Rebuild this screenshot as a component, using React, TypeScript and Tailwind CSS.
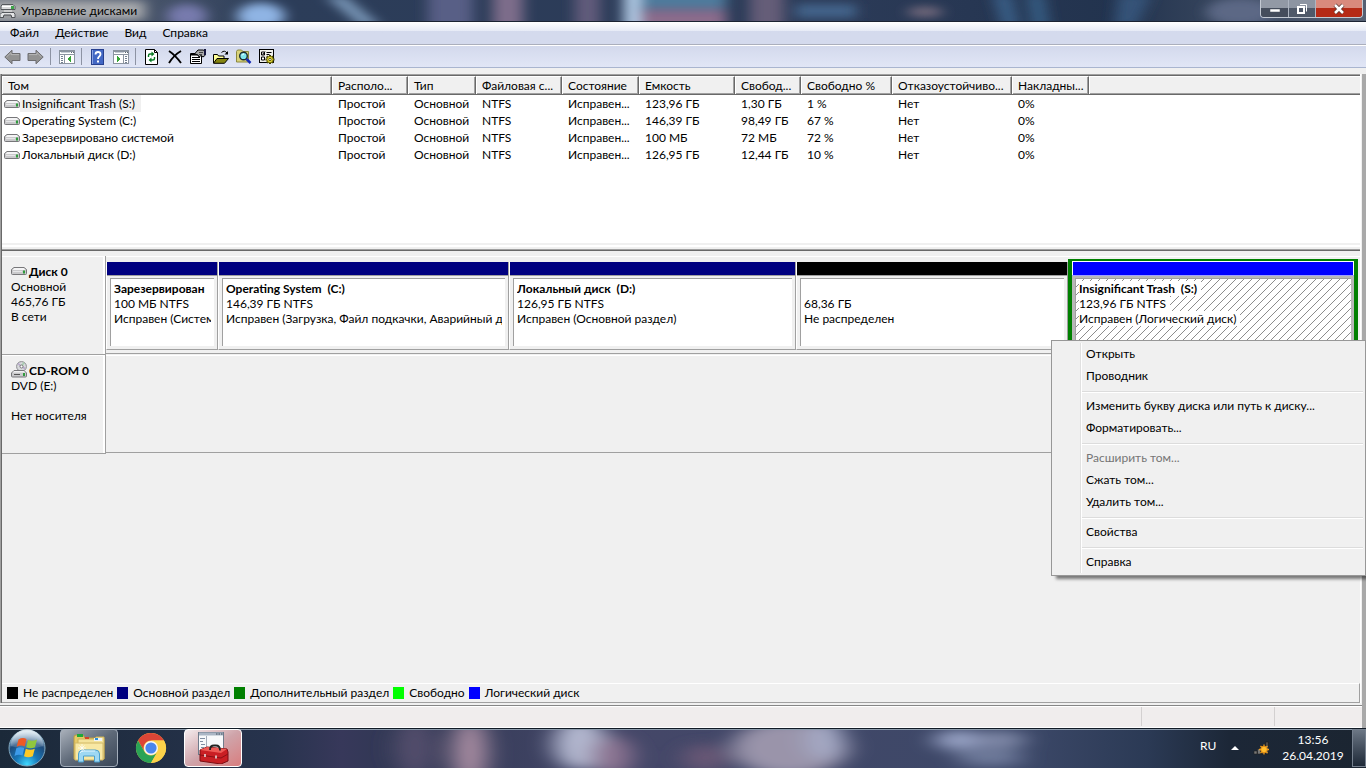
import React from "react";
import clsx from "clsx";

const menus = ["Файл", "Действие", "Вид", "Справка"];

const columns = [
  { title: "Том", width: "w-[330px]" },
  { title: "Располо...", width: "w-[76px]" },
  { title: "Тип", width: "w-[68px]" },
  { title: "Файловая с...", width: "w-[86px]" },
  { title: "Состояние", width: "w-[77px]" },
  { title: "Емкость", width: "w-[96px]" },
  { title: "Свобод...", width: "w-[66px]" },
  { title: "Свободно %", width: "w-[91px]" },
  { title: "Отказоустойчиво...", width: "w-[120px]" },
  { title: "Накладны...", width: "w-[77px]" },
];

const volumes = [
  ["Insignificant Trash (S:)", "Простой", "Основной", "NTFS", "Исправен...", "123,96 ГБ", "1,30 ГБ", "1 %", "Нет", "0%"],
  ["Operating System (C:)", "Простой", "Основной", "NTFS", "Исправен...", "146,39 ГБ", "98,49 ГБ", "67 %", "Нет", "0%"],
  ["Зарезервировано системой", "Простой", "Основной", "NTFS", "Исправен...", "100 МБ", "72 МБ", "72 %", "Нет", "0%"],
  ["Локальный диск (D:)", "Простой", "Основной", "NTFS", "Исправен...", "126,95 ГБ", "12,44 ГБ", "10 %", "Нет", "0%"],
];

const partitions = [
  { name: "Зарезервирован", size: "100 МБ NTFS", status: "Исправен (Систем", bar: "bg-[#000080]", grow: "grow-[110]" },
  { name: "Operating System  (C:)", size: "146,39 ГБ NTFS", status: "Исправен (Загрузка, Файл подкачки, Аварийный д", bar: "bg-[#000080]", grow: "grow-[289]" },
  { name: "Локальный диск  (D:)", size: "126,95 ГБ NTFS", status: "Исправен (Основной раздел)", bar: "bg-[#000080]", grow: "grow-[285]" },
  { name: "", size: "68,36 ГБ", status: "Не распределен", bar: "bg-black", grow: "grow-[270]" },
];

const legend = [
  { label: "Не распределен", color: "bg-black" },
  { label: "Основной раздел", color: "bg-[#000080]" },
  { label: "Дополнительный раздел", color: "bg-[#008000]" },
  { label: "Свободно", color: "bg-[#00ff00]" },
  { label: "Логический диск", color: "bg-[#0000ff]" },
];

const contextGroups = [
  ["Открыть", "Проводник"],
  ["Изменить букву диска или путь к диску...", "Форматировать..."],
  ["Расширить том...", "Сжать том...", "Удалить том..."],
  ["Свойства"],
  ["Справка"],
];

const DriveIcon = () => (
  <svg width="16" height="16" viewBox="0 0 16 16" className="shrink-0">
    <path d="M3 4.500h10l2.500 2v4q0 1-1 1h-13q-1 0-1-1v-4z" fill="#c9c9cb" stroke="#77777a" />
    <path d="M3.300 5h9.400l1.800 2H1.500z" fill="#f4f4f5" />
    <path d="M2 8.500h9" stroke="#e6e6e8" />
    <rect x="12" y="7.500" width="2" height="3" fill="#2f9a3c" />
  </svg>
);

const CdIcon = () => (
  <svg width="16" height="17" viewBox="0 0 16 17" className="shrink-0">
    <circle cx="10.500" cy="5.500" r="4.900" fill="#d8dadd" stroke="#8c8c90" />
    <path d="M10.500 5.500L7 2.500M10.500 5.500l3.500 2" stroke="#b7a6cc" strokeWidth="1.500" />
    <path d="M10.500 5.500L13 1.500" stroke="#a7cfae" strokeWidth="1.500" />
    <circle cx="10.500" cy="5.500" r="1.500" fill="#fff" stroke="#777" />
    <path d="M3 9.500h10l2.500 2.500v3q0 1-1 1h-13q-1 0-1-1v-3z" fill="#c9c9cb" stroke="#77777a" />
    <path d="M3.300 10h9.400l1.600 1.500H1.700z" fill="#f1f1f2" />
    <path d="M3 13.500h6" stroke="#555" />
    <rect x="12" y="12" width="2" height="3" fill="#2f9a3c" />
  </svg>
);

const AppIcon = () => (
  <svg width="16" height="16" viewBox="0 0 16 16" className="shrink-0">
    <path d="M2 1.500h11l2 2v3H1v-3z" fill="#d9dadb" stroke="#55585c" />
    <path d="M2 3.500h10" stroke="#fff" />
    <rect x="11" y="3" width="3" height="3" fill="#3da549" />
    <path d="M2 9.500h12l1 2v3H0v-3z" fill="#e3e4e5" stroke="#55585c" />
    <path d="M3 15l1-3h7l1 3" fill="#9a9c9f" stroke="#4a4d50" />
    <path d="M4 8h8" stroke="#e9e9e9" />
  </svg>
);

const ArrowIcon = ({ flip }: { flip?: boolean }) => (
  <svg width="17" height="16" viewBox="0 0 17 16" className={clsx(flip && "-scale-x-100")}>
    <path d="M.8 8L8 1.200v3.300h8v7H8v3.300z" fill="#929292" stroke="#6d6d70" strokeLinejoin="round" />
    <path d="M2.500 8L7 3.600v2h8" fill="none" stroke="#b5b5b5" />
  </svg>
);

const PaneIcon = ({ flip }: { flip?: boolean }) => (
  <svg width="16" height="14" viewBox="0 0 16 14" shapeRendering="crispEdges">
    <rect x=".5" y=".5" width="15" height="13" fill="#fff" stroke="#8b94a0" />
    <path d="M1 1.500h14M1 4.500h14" stroke="#8b94a0" />
    <path d="M2 2.500h9" stroke="#c8ced6" />
    <path d="M12 2.500h1M14 2.500h1" stroke="#5c6670" />
    {flip ? (
      <>
        <path d="M10.500 5v9" stroke="#8b94a0" />
        <path d="M12 6.500h2M12 8.500h2M12 10.500h2M12 12.500h2" stroke="#748091" />
        <path d="M4 6l4 3-4 3z" fill="#35a535" />
      </>
    ) : (
      <>
        <path d="M5.500 5v9" stroke="#8b94a0" />
        <path d="M2 6.500h2M2 8.500h2M2 10.500h2M2 12.500h2" stroke="#748091" />
        <path d="M12 6L8 9l4 3z" fill="#35a535" />
      </>
    )}
  </svg>
);

const HelpIcon = () => (
  <svg width="13" height="16" viewBox="0 0 13 16">
    <rect x=".5" y=".5" width="12" height="15" fill="#4267c4" stroke="#27408f" />
    <path d="M1.500 1v14" stroke="#89a3e2" />
    <path d="M4.500 5.500q0-2.500 2.500-2.500t2.500 2.200q0 1.300-1.300 2.200T7 10" fill="none" stroke="#fff" strokeWidth="1.800" />
    <rect x="6" y="11.500" width="2" height="2" fill="#fff" />
  </svg>
);

const RefreshIcon = () => (
  <svg width="13" height="16" viewBox="0 0 13 16">
    <path d="M.5.5h9l3 3v12H.5z" fill="#fff" stroke="#000" />
    <path d="M9.500.5v3h3" fill="none" stroke="#000" />
    <path d="M3.500 8V6.500q0-1.500 1.500-1.500h2M9.500 8v1.500q0 1.500-1.500 1.500H6" fill="none" stroke="#087a24" strokeWidth="1.400" />
    <path d="M6.500 2.500L9.500 5l-3 2.500zM6.500 8.500v5L3.500 11z" fill="#087a24" />
  </svg>
);

const DeleteIcon = () => (
  <svg width="14" height="14" viewBox="0 0 14 14">
    <path d="M1 1q6 4 12 12" fill="none" stroke="#000" strokeWidth="1.900" />
    <path d="M13 1Q6 5 1 13" fill="none" stroke="#000" strokeWidth="1.900" />
  </svg>
);

const PropertiesIcon = () => (
  <svg width="16" height="15" viewBox="0 0 16 15">
    <path d="M.5 4.500h11v10H.5z" fill="#fff" stroke="#000" />
    <path d="M1 5.500h10" stroke="#000" strokeWidth="2" />
    <path d="M2 8.500h8M2 10.500h8M2 12.500h8" stroke="#000" />
    <path d="M4.500 5l3.500-4h5l2.500 1v4l-2.500 2-2-1.500-2 1.500-1-2z" fill="#a9a9a9" stroke="#000" />
    <path d="M9 3.500h4M9 5.500h3" stroke="#444" />
    <rect x="14" y="0" width="2" height="6" fill="#15153c" />
  </svg>
);

const OpenIcon = () => (
  <svg width="16" height="14" viewBox="0 0 16 14">
    <path d="M.5 13V4.500h4l1 1.500H11v3" fill="#ffff9a" stroke="#000" />
    <path d="M.5 13.300L4 8.500h11.500L11.500 13.300z" fill="#858510" stroke="#000" />
    <path d="M8.500 2.500q3-2.800 5.500.500" fill="none" stroke="#000" />
    <path d="M15 1v3.500h-3.500z" fill="#000" />
  </svg>
);

const FindIcon = () => (
  <svg width="16" height="15" viewBox="0 0 16 15">
    <path d="M.5 13V2.500l1-1.500h4l1.500 1.500h5.500V13z" fill="#d9d37b" stroke="#8b883f" />
    <circle cx="7.500" cy="7" r="3.800" fill="#7fe6ee" stroke="#1b2b34" strokeWidth="1.400" />
    <path d="M6 6.500q.5-1.500 2-1.500" fill="none" stroke="#fff" />
    <path d="M10.500 10l4 4" stroke="#1428b4" strokeWidth="2.500" />
  </svg>
);

const SettingsIcon = () => (
  <svg width="16" height="16" viewBox="0 0 16 16">
    <rect x=".5" y=".5" width="14" height="13" fill="#f1f1ec" stroke="#000" />
    <path d="M2.500 3h3v3h-3zM2.500 8h3v3h-3z" fill="#fff" stroke="#000" />
    <path d="M3 4.500l1 1 2-3M7.500 3.500h5M7.500 5.500h3M7.500 8.500h2" fill="none" stroke="#000" />
    <path d="M11 6v9M6.500 10.500h9M7.800 7.300l6.400 6.400M14.200 7.300l-6.400 6.400" stroke="#3b3a00" strokeWidth="2" />
    <circle cx="11" cy="10.500" r="3.200" fill="#e6dd37" stroke="#77700c" />
    <circle cx="11" cy="10.500" r="1.200" fill="#fff" stroke="#55500a" />
  </svg>
);

const ToolButton = ({ label, children }: { label: string; children: React.ReactNode }) => (
  <button aria-label={label} className="flex h-5 w-[23px] items-center justify-center">
    {children}
  </button>
);

const Separator = () => <span className="mr-1 ml-[3px] h-[17px] w-px bg-[#8d93a3]" />;

// Blurred wallpaper that shows through the glass of the window frame
const TitleGlass = () => (
  <svg className="absolute inset-0 h-full w-full" viewBox="0 0 1366 21" preserveAspectRatio="none">
    <defs>
      <filter id="titleBlur" x="-20%" y="-100%" width="140%" height="300%">
        <feGaussianBlur stdDeviation="7 4" />
      </filter>
      <linearGradient id="titleBase">
        <stop offset="0" stopColor="#6d7480" />
        <stop offset=".1" stopColor="#4a566b" />
        <stop offset=".2" stopColor="#2c3d59" />
        <stop offset=".6" stopColor="#2c3b58" />
        <stop offset=".82" stopColor="#22334e" />
        <stop offset="1" stopColor="#556073" />
      </linearGradient>
    </defs>
    <rect width="1366" height="21" fill="url(#titleBase)" />
    <g filter="url(#titleBlur)">
      <rect x="-10" y="1" width="155" height="19" fill="#b9b8b8" opacity=".85" />
      <ellipse cx="187" cy="16" rx="20" ry="12" fill="#777aad" />
      <ellipse cx="261" cy="16" rx="24" ry="13" fill="#8fb4e4" />
      <path d="M325-4l36 30h20L345-4z" fill="#7997b8" />
      <rect x="428" y="-10" width="45" height="42" fill="#595f86" />
      <rect x="493" y="-10" width="30" height="42" fill="#7e6d8b" />
      <rect x="575" y="-10" width="25" height="42" fill="#625b7b" />
      <rect x="624" y="-10" width="16" height="42" fill="#b4cde8" />
      <rect x="640" y="-10" width="86" height="19" fill="#507b9d" />
      <rect x="640" y="10" width="86" height="20" fill="#8b6c8c" />
      <rect x="750" y="-10" width="34" height="42" fill="#655d78" />
      <rect x="796" y="4" width="60" height="14" fill="#42648a" />
      <ellipse cx="925" cy="12" rx="18" ry="5" fill="#776c7e" />
      <path d="M992-6h20l8 34h-18z" fill="#385c83" />
      <path d="M1026-6h18l6 34h-18z" fill="#355a80" />
      <path d="M1118-6h34l-16 34h-22z" fill="#355278" />
      <ellipse cx="1240" cy="12" rx="34" ry="14" fill="#5b6885" />
    </g>
  </svg>
);

const TaskbarGlass = () => (
  <svg className="absolute inset-0 h-full w-full" viewBox="0 0 1366 40" preserveAspectRatio="none">
    <defs>
      <filter id="taskBlur" x="-20%" y="-50%" width="140%" height="200%">
        <feGaussianBlur stdDeviation="12 6" />
      </filter>
      <linearGradient id="taskBase">
        <stop offset="0" stopColor="#1b2939" />
        <stop offset=".2" stopColor="#27334d" />
        <stop offset=".25" stopColor="#37385a" />
        <stop offset=".29" stopColor="#303854" />
        <stop offset=".45" stopColor="#454768" />
        <stop offset=".75" stopColor="#3c4868" />
        <stop offset=".84" stopColor="#2b3a55" />
        <stop offset=".9" stopColor="#1c2737" />
        <stop offset="1" stopColor="#1b2531" />
      </linearGradient>
    </defs>
    <rect width="1366" height="40" fill="url(#taskBase)" />
    <g filter="url(#taskBlur)">
      <ellipse cx="415" cy="20" rx="20" ry="30" fill="#524d6c" />
      <ellipse cx="470" cy="24" rx="17" ry="34" fill="#a98da2" />
      <ellipse cx="580" cy="16" rx="26" ry="26" fill="#b2b7cf" />
      <ellipse cx="612" cy="28" rx="20" ry="20" fill="#8b7391" />
      <ellipse cx="705" cy="30" rx="22" ry="14" fill="#675775" />
      <ellipse cx="790" cy="20" rx="58" ry="28" fill="#9a94aa" />
      <ellipse cx="825" cy="12" rx="18" ry="20" fill="#a4a9c4" />
      <ellipse cx="960" cy="12" rx="26" ry="10" fill="#97a2c4" />
      <ellipse cx="1000" cy="12" rx="26" ry="9" fill="#8089a8" />
      <ellipse cx="990" cy="30" rx="34" ry="8" fill="#707c9c" />
    </g>
    <path d="M0 .5h1366" stroke="#111b26" />
    <path d="M0 1.500h1366" stroke="#8d9cac" />
  </svg>
);

const StartOrb = () => (
  <svg width="38" height="38" viewBox="0 0 38 38">
    <defs>
      <radialGradient id="orb" cx=".5" cy=".95" r=".9">
        <stop offset="0" stopColor="#3fd9ff" />
        <stop offset=".35" stopColor="#1777b8" />
        <stop offset=".7" stopColor="#1f4c7c" />
        <stop offset="1" stopColor="#9fc0d8" />
      </radialGradient>
      <linearGradient id="orbShine" x2="0" y2="1">
        <stop offset="0" stopColor="#fff" stopOpacity=".75" />
        <stop offset="1" stopColor="#fff" stopOpacity=".1" />
      </linearGradient>
    </defs>
    <circle cx="19" cy="19" r="18" fill="url(#orb)" stroke="#7fa6bd" />
    <path d="M2.500 17a16.500 16.500 0 0 1 33 0q-16 5-33 0z" fill="url(#orbShine)" />
    <path d="M10.500 10.500q4-2.500 8-.5l-1.800 7.500q-4-2-8 .3z" fill="#ee5a24" />
    <path d="M20 10.800q4 2 9-.3l-2 7.700q-4.500 2-8.800 0z" fill="#8fc73e" />
    <path d="M8.300 19.300q4-2.200 8-.2l-1.800 7.500q-4-2-8 .4z" fill="#3d9be9" />
    <path d="M17.800 19.700q4.500 2 9 0l-2 7.600q-4.700 2-8.800 0z" fill="#fbc926" />
  </svg>
);

const ExplorerIcon = () => (
  <svg width="34" height="32" viewBox="0 0 34 32">
    <path d="M2 5q0-2 2-2h7l2 3h18q1 0 1 1v20H2z" fill="#e6c968" stroke="#b99b43" />
    <rect x="5" y="2" width="6" height="3" fill="#1fa83a" />
    <path d="M6 7h16l2-2h8v22H6z" fill="#f4e39b" stroke="#cbb058" />
    <rect x="13" y="5" width="4" height="2" fill="#d54227" />
    <rect x="22" y="6" width="8" height="3" fill="#eef4fa" />
    <rect x="23" y="6" width="3" height="2" fill="#2d8fd5" />
    <path d="M3 11h28v17H3z" fill="#f8e8a4" stroke="#d2b866" />
    <path d="M6.500 30v-8q0-4 4-4h13q4 0 4 4v8h-5v-6h-11v6z" fill="#9ed8f3" stroke="#4b9fcb" />
    <path d="M8 21q1-2 3-2h12" fill="none" stroke="#e3f6ff" />
    <path d="M10 12v8M6 16h8M7.500 13.500l5 5M12.500 13.500l-5 5" stroke="#fff" strokeWidth=".7" />
  </svg>
);

const ChromeIcon = () => (
  <svg width="32" height="32" viewBox="0 0 32 32">
    <circle cx="16" cy="16" r="15" fill="#fcd24a" />
    <path d="M3 8.500A15 15 0 0 1 29 8.500H16a7.500 7.500 0 0 0-6.500 11.200z" fill="#dc4536" />
    <path d="M3 8.500l6.500 11.200A7.500 7.500 0 0 0 22.500 19.700L16 31A15 15 0 0 1 3 8.500z" fill="#2aa356" />
    <path d="M29 8.500H16v.2a7.500 7.500 0 0 1 6.500 11L16 31A15 15 0 0 0 29 8.500z" fill="#fcd24a" />
    <circle cx="16" cy="16" r="7" fill="#f6f6f6" />
    <circle cx="16" cy="16" r="5.600" fill="#4a86ee" />
  </svg>
);

const ToolboxIcon = () => (
  <svg width="32" height="32" viewBox="0 0 32 32">
    <rect x="1.500" y=".5" width="25" height="22" fill="#f7f9fb" stroke="#6f7b8b" />
    <path d="M2 2h24" stroke="#aab6c5" strokeWidth="3" />
    <path d="M19 2h1.500M21.500 2H23M24 2h1.500" stroke="#3f4a5a" />
    <path d="M9.500 4v18" stroke="#a3adba" />
    <path d="M3 6.500h5M3 9.500h3M4 12.500h4M4 15.500h3M3 18.500h5" stroke="#7f8ea2" />
    <path d="M3 18l7-3 20 2 1 3v9l-7 3-21-3z" fill="#c91f24" stroke="#7c0c12" />
    <path d="M3 18l7-3 20 2-6 4z" fill="#ee5a56" />
    <path d="M13 18q0-4.500 4-4.500h2q4 0 4 5" fill="none" stroke="#222" strokeWidth="1.800" />
    <path d="M3 23l21 3 7-4" fill="none" stroke="#8a1015" />
    <path d="M8 22v3M19 23.500v3" stroke="#e8e8e8" strokeWidth="1.500" />
  </svg>
);

const NetworkIcon = () => (
  <svg width="17" height="14" viewBox="0 0 17 14">
    <path d="M1 10h3v3H1zM4.500 8h3v5h-3z" fill="#777" stroke="#222" strokeWidth=".6" />
    <path d="M8.500 5h3v8h-3zM12.500 1h3v12h-3z" fill="#4a4a4a" stroke="#151515" strokeWidth=".6" />
    <path d="M11 3.500v10M6 8.500h10M7.500 5l7 7M14.500 5l-7 7" stroke="#f0a01e" strokeWidth="1.300" />
    <circle cx="11" cy="8.500" r="3.200" fill="#ffbd2e" stroke="#e58d12" />
  </svg>
);

const DiskLabel = ({ icon, name, lines }: { icon: React.ReactNode; name: string; lines: string[] }) => (
  <div className="w-[104px] shrink-0 border-r border-b border-[#a0a0a0] shadow-[inset_0_1px_0_#fff,inset_-2px_0_0_#fff]">
    <div className="pt-2 pl-[9px] leading-[15px]">
      <div className="flex h-[15px] items-end gap-[2px] font-bold">
        {icon}
        <span>{name}</span>
      </div>
      {lines.map((line, i) => (
        <div key={i} className="h-[15px]">{line}</div>
      ))}
    </div>
  </div>
);

const App = () => {
  return (
    <div className="relative flex h-screen flex-col overflow-hidden bg-[#f0f0f0] font-[Lato,'Open_Sans',sans-serif] text-[12px] text-black">
      <header className="relative flex h-[22px] items-center border-b border-[#1b2333]">
        <TitleGlass />
        <div className="relative flex items-center gap-[5px]">
          <AppIcon />
          <h1>Управление дисками</h1>
        </div>
        <div className="relative mr-[3px] ml-auto flex h-[18px] self-start overflow-hidden rounded-b border border-t-0 border-[#c3c9d2]">
          <button aria-label="Свернуть" className="flex w-7 items-center justify-center border-r border-[#aeb5c1] bg-linear-to-b from-[#9299a5] from-50% to-[#454d5c] to-50%">
            <svg width="12" height="12" viewBox="0 0 12 12"><rect x="1" y="6" width="10" height="3" fill="#fff" stroke="#4a4f5b" strokeWidth=".5" /></svg>
          </button>
          <button aria-label="Восстановить" className="flex w-[27px] items-center justify-center border-r border-[#aeb5c1] bg-linear-to-b from-[#8d95a2] from-50% to-[#4f5969] to-50%">
            <svg width="12" height="12" viewBox="0 0 12 12" fill="none" stroke="#fff">
              <path d="M4 1.500h6.500v7" />
              <rect x="2" y="4" width="6" height="6" strokeWidth="2" />
            </svg>
          </button>
          <button aria-label="Закрыть" className="flex w-[46px] items-center justify-center bg-linear-to-b from-[#d98a7d] from-50% to-[#b52a16] to-50%">
            <svg width="12" height="12" viewBox="0 0 12 12">
              <path d="M2 2l8 8M10 2l-8 8" stroke="#5c3732" strokeWidth="4" />
              <path d="M2 2l8 8M10 2l-8 8" stroke="#fff" strokeWidth="2.500" />
            </svg>
          </button>
        </div>
      </header>

      <nav className="flex h-[23px] items-center border-b border-[#abafbc] bg-linear-to-b from-white via-[#e7ebf6] via-40% to-[#d4daed] to-40% pl-[2px]">
        {menus.map((menu) => (
          <button key={menu} className="h-5 px-2">{menu}</button>
        ))}
      </nav>

      <div role="toolbar" className="flex h-[23px] items-center border-t border-b border-t-white border-b-[#a9b5cf] bg-linear-to-b from-[#d3d9ec] to-[#e1e6f6] pl-px">
        <ToolButton label="Назад"><ArrowIcon /></ToolButton>
        <ToolButton label="Вперед"><ArrowIcon flip /></ToolButton>
        <Separator />
        <ToolButton label="Дерево консоли"><PaneIcon /></ToolButton>
        <Separator />
        <ToolButton label="Справка"><HelpIcon /></ToolButton>
        <ToolButton label="Панель действий"><PaneIcon flip /></ToolButton>
        <Separator />
        <ToolButton label="Обновить"><RefreshIcon /></ToolButton>
        <ToolButton label="Удалить"><DeleteIcon /></ToolButton>
        <ToolButton label="Свойства"><PropertiesIcon /></ToolButton>
        <ToolButton label="Открыть"><OpenIcon /></ToolButton>
        <ToolButton label="Проводник"><FindIcon /></ToolButton>
        <ToolButton label="Параметры"><SettingsIcon /></ToolButton>
      </div>

      <div className="flex min-h-0 flex-1 flex-col pt-1.5">
        <div className="flex min-h-0 flex-1 flex-col border-r-4 border-[#a9a9a9]">
          <main className="mr-px flex min-h-0 flex-1 flex-col border-r border-l border-r-white border-l-[#a0a0a0]">
            <div className="flex flex-1 flex-col border-l border-[#696969]">
              {/* Volume list */}
              <section className="border-t border-[#a0a0a0]">
                <div className="h-[168px] overflow-hidden border-t border-[#696969] bg-white">
                  <table className="w-full table-fixed border-separate border-spacing-0 text-left">
                    <thead>
                      <tr>
                        {columns.map((col) => (
                          <th
                            key={col.title}
                            className={clsx(
                              "h-[19px] overflow-hidden border-t border-r border-b border-t-white border-r-[#696969] border-b-[#696969] bg-[#f0f0f0] p-0 pl-1.5 leading-[17px] font-normal whitespace-nowrap shadow-[inset_1px_0_0_#fff,inset_-1px_-1px_0_#a0a0a0]",
                              col.width
                            )}
                          >
                            {col.title}
                          </th>
                        ))}
                        <th className="border-t border-b border-t-white border-b-[#696969] bg-[#f0f0f0] p-0 shadow-[inset_1px_0_0_#fff,inset_0_-1px_0_#a0a0a0]" />
                      </tr>
                    </thead>
                    <tbody>
                      {volumes.map((row, i) => (
                        <tr key={row[0]}>
                          {row.map((cell, j) => (
                            <td key={j} className={clsx("h-[17px] overflow-hidden p-0 leading-[17px] whitespace-nowrap", j > 0 && "pl-1.5")}>
                              {j === 0 ? (
                                <div className="flex items-center pl-[2px]">
                                  <DriveIcon />
                                  <span className={clsx("pr-1.5 pl-[2px]", i === 0 && "bg-[#f0f0f0]")}>{cell}</span>
                                </div>
                              ) : (
                                cell
                              )}
                            </td>
                          ))}
                          <td className="p-0" />
                        </tr>
                      ))}
                    </tbody>
                  </table>
                </div>
                <div className="h-2 border-b border-[#696969] shadow-[inset_0_-1px_0_#a0a0a0,inset_0_-3px_0_#f0f0f0,inset_0_-5px_0_#fff]" />
              </section>

              {/* Graphical disk view */}
              <section className="mt-[5px] flex-1 overflow-hidden">
                <div className="flex h-[99px]">
                  <DiskLabel icon={<DriveIcon />} name="Диск 0" lines={["Основной", "465,76 ГБ", "В сети"]} />
                  <div className="mb-px flex min-w-0 flex-1 items-start border-b border-[#a0a0a0] pr-[2px] shadow-[inset_0_1px_0_#fff]">
                    {partitions.map((part) => (
                      <div key={part.size} className={clsx("mt-[6px] flex h-[88px] min-w-0 basis-0 flex-col border-r border-b border-l border-r-[#a0a0a0] border-b-[#a0a0a0] border-l-white", part.grow)}>
                        <div className={clsx("h-[13px]", part.bar)} />
                        <div className="flex flex-1 flex-col border-t border-[#a0a0a0] px-[3px] pt-[2px] pb-[3px]">
                          <div className="flex-1 overflow-hidden border-t border-l border-[#a0a0a0] bg-white px-[3px] pt-[2px] leading-[15px] whitespace-pre">
                            <div className="h-[15px] overflow-hidden font-bold">{part.name}</div>
                            <div className="h-[15px] overflow-hidden">{part.size}</div>
                            <div className="h-[15px] overflow-hidden">{part.status}</div>
                          </div>
                        </div>
                      </div>
                    ))}
                    <div className="mt-[3px] flex h-[94px] min-w-0 grow-[282] basis-0 flex-col border-4 border-t-2 border-[#008000] bg-[#b8b8b8]">
                      <div className="border border-b-0 border-white">
                        <div className="h-[13px] bg-[#0000ff]" />
                      </div>
                      <div className="flex flex-1 border-t border-[#a0a0ff] p-[3px] pt-[2px]">
                        <div className="relative flex-1 overflow-hidden border-t border-l border-[#a0a0a0] bg-white pt-[2px] pl-[3px] leading-[15px] whitespace-pre">
                          <svg className="absolute inset-0 h-full w-full">
                            <defs>
                              <pattern id="hatch" width="8" height="8" patternUnits="userSpaceOnUse">
                                <path d="M0 8L8 0M-1 1L1-1M7 9L9 7" stroke="#8c8c8c" />
                              </pattern>
                            </defs>
                            <rect width="100%" height="100%" fill="url(#hatch)" />
                          </svg>
                          <div className="relative flex flex-col items-start">
                            <span className="h-[15px] bg-white pr-1 font-bold">Insignificant Trash  (S:)</span>
                            <span className="h-[15px] bg-white pr-1">123,96 ГБ NTFS</span>
                            <span className="h-[15px] bg-white pr-1">Исправен (Логический диск)</span>
                          </div>
                        </div>
                      </div>
                    </div>
                  </div>
                </div>
                <div className="flex h-[99px]">
                  <DiskLabel icon={<CdIcon />} name="CD-ROM 0" lines={["DVD (E:)", "", "Нет носителя"]} />
                  <div className="mb-px flex-1 border-b border-[#a0a0a0] shadow-[inset_0_1px_0_#fff]" />
                </div>
              </section>

              <footer className="flex h-5 items-center gap-1 border-t border-r border-b border-t-white border-r-[#a0a0a0] border-b-[#a0a0a0] pl-[5px]">
                {legend.map((item) => (
                  <div key={item.label} className="flex items-center gap-[5px]">
                    <span className={clsx("h-3 w-[11px]", item.color)} />
                    <span>{item.label}</span>
                  </div>
                ))}
              </footer>
            </div>
          </main>
          <div className="mt-[2px] flex h-[23px] border-t border-b border-t-[#868686] border-b-white bg-[#f0eded] shadow-[inset_0_1px_0_#fff]">
            <div className="flex-1" />
            <div className="my-px w-[133px] border-l border-[#d3d0d0]" />
            <div className="my-px w-[88px] border-l border-[#d3d0d0]" />
          </div>
        </div>
      </div>

      <footer className="relative flex h-10 items-center bg-[#27334d] text-white">
        <TaskbarGlass />
        <button aria-label="Пуск" className="relative ml-2"><StartOrb /></button>
        <button aria-label="Проводник" className="relative ml-3.5 flex h-[38px] w-[58px] items-center justify-center rounded-sm border border-[#a3adba] bg-linear-to-br from-[#a9b0ba] via-[#5e6978] to-[#3b4758]">
          <ExplorerIcon />
        </button>
        <button aria-label="Google Chrome" className="relative flex h-[38px] w-[66px] items-center justify-center"><ChromeIcon /></button>
        <button aria-label="Управление дисками" className="relative flex h-[38px] w-[58px] items-center justify-center rounded-sm border border-white bg-linear-to-br from-[#f3ecee] via-[#cfa4aa] to-[#d87d7f]">
          <ToolboxIcon />
        </button>
        <div className="relative ml-auto flex items-center">
          <span className="mb-1 w-[17px]">RU</span>
          <button aria-label="Отображать скрытые значки" className="ml-3 flex h-5 w-3 items-center justify-center">
            <svg width="8" height="4" viewBox="0 0 8 4"><path d="M0 4l4-4 4 4z" fill="#fff" /></svg>
          </button>
          <button aria-label="Сеть" className="ml-3"><NetworkIcon /></button>
          <time className="ml-1 w-[78px] text-center leading-4">
            13:56
            <br />
            26.04.2019
          </time>
        </div>
        <button aria-label="Свернуть все окна" className="relative h-[38px] w-3.5 border border-[#76818f] bg-linear-to-b from-[#6c7785] to-[#1f2a38]" />
      </footer>

      {/* Context menu of the selected volume */}
      <div role="menu" className="absolute top-[340px] right-0 w-[315px] border border-[#979797] bg-[#f0f0f0] p-[2px] shadow-[4px_4px_3px_-1px_rgba(0,0,0,0.5)]">
        <div className="ml-[26px] border-l border-[#e0e0e0]">
          {contextGroups.map((group, i) => (
            <div key={group[0]} className={clsx("flex flex-col border-l border-white", i < contextGroups.length - 1 && "pb-1")}>
              {i > 0 && <hr className="mb-[2px] h-[2px] border-t border-b border-t-[#dcdcdc] border-b-white" />}
              {group.map((item) => (
                <button
                  key={item}
                  role="menuitem"
                  disabled={item === "Расширить том..."}
                  className="h-[22px] pl-1 text-left disabled:text-[#757575]"
                >
                  {item}
                </button>
              ))}
            </div>
          ))}
        </div>
      </div>
    </div>
  );
};

export default App;
